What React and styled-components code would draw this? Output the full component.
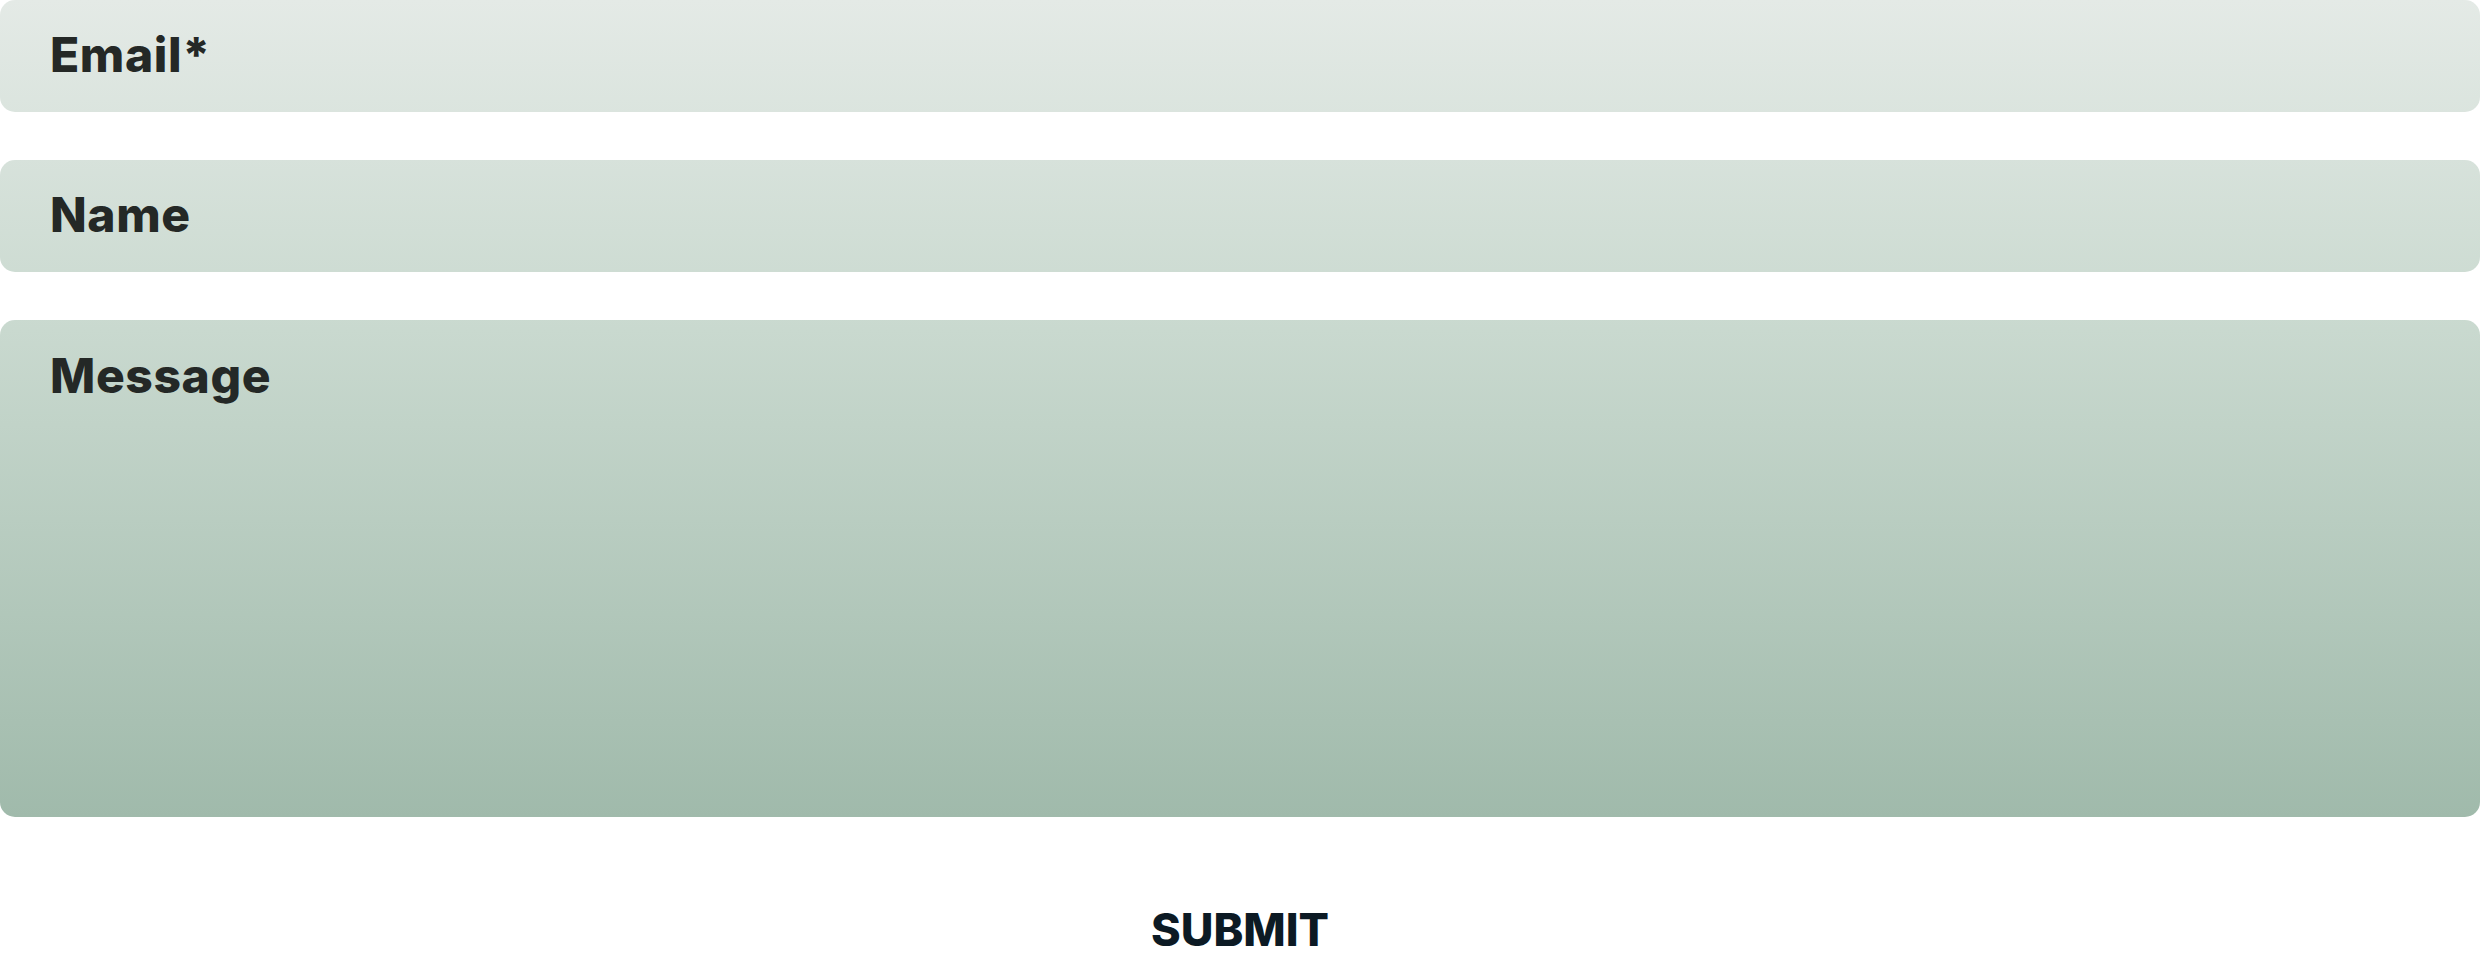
import React from "react";
import styled, { createGlobalStyle, css } from "styled-components";

const Global = createGlobalStyle`
  html, body { margin: 0; padding: 0; background: #ffffff; }
  * { box-sizing: border-box; }
`;

const Form = styled.form`
  display: flex;
  flex-direction: column;
  gap: 48px;
  width: 100%;
`;

const fieldBase = css`
  display: block;
  width: 100%;
  border: none;
  outline: none;
  border-radius: 15px;
  margin: 0;
  padding: 30px 50px 0;
  background: linear-gradient(180deg, #e4eae6 0px, #c9d9cf 330px, #a0baab 817px);
  background-attachment: fixed;
  font-family: Inter, "Liberation Sans", sans-serif;
  font-weight: 800;
  font-size: 48px;
  line-height: 1;
  letter-spacing: 0.6px;
  color: #242826;
  resize: none;
  &::placeholder {
    color: #242826;
    opacity: 1;
  }
`;

const Input = styled.input`
  ${fieldBase}
  height: 112px;
  padding-top: 0;
  padding-bottom: 3px;
`;

const TextArea = styled.textarea`
  ${fieldBase}
  height: 497px;
  padding-top: 32px;
  overflow: hidden;
`;

const Actions = styled.div`
  display: flex;
  justify-content: center;
  padding-top: 42px;
`;

const SubmitButton = styled.button`
  border: none;
  background: transparent;
  padding: 0;
  cursor: pointer;
  font-family: Inter, "Liberation Sans", sans-serif;
  font-weight: 800;
  font-size: 45px;
  line-height: 1;
  color: #0c1a24;
  letter-spacing: 0px;
`;

export default function App() {
  return (
    <>
      <Global />
      <Form onSubmit={(e) => e.preventDefault()}>
        <Input type="email" placeholder="Email*" />
        <Input type="text" placeholder="Name" />
        <TextArea placeholder="Message" />
        <Actions>
          <SubmitButton type="submit">SUBMIT</SubmitButton>
        </Actions>
      </Form>
    </>
  );
}
